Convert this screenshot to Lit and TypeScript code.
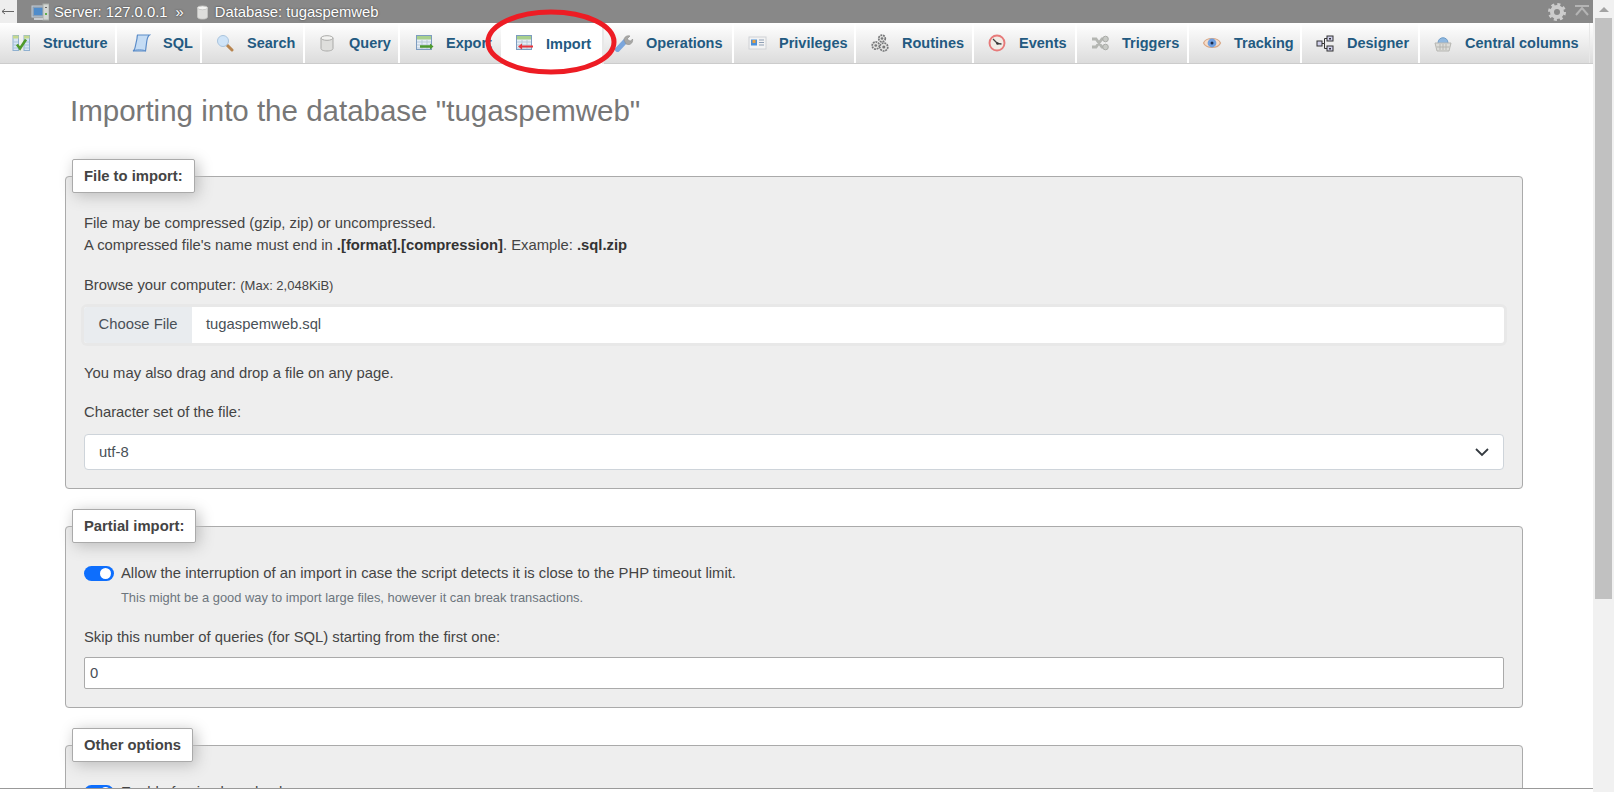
import { LitElement, html, css, svg } from "lit";
import { customElement } from "lit/decorators.js";

const tableLines = svg`
  <rect x="1.500" y="1.500" width="15" height="14" fill="#e6eef6" stroke="#7d9cc0"/>
  <rect x="2" y="2" width="14" height="3.500" fill="#a8d08d"/>
  <path d="M2 8h14M2 11h14M2 14h14M7 6v9M12 6v9" stroke="#b9c9da" fill="none"/>`;

const gear = (cx: number, cy: number, r: number) => svg`
  <circle cx=${cx} cy=${cy} r=${r} fill="#e4e4e2" stroke="#77787a" stroke-width="1.700" stroke-dasharray="1.900 .8"/>
  <circle cx=${cx} cy=${cy} r=${r * 0.38} fill="#77787a"/>`;

const icons: Record<string, unknown> = {
  server: svg`
    <rect x="1" y="3" width="13" height="11" fill="#8a9fb5" stroke="#c4ccd4"/>
    <rect x="3" y="5" width="9" height="7" fill="#4f8ccb"/>
    <rect x="12" y="1" width="6" height="16" fill="#d3d6d3" stroke="#a9aeaa"/>
    <rect x="14" y="4" width="2" height="1" fill="#666"/><rect x="14" y="10" width="2" height="2" fill="#5fae4a"/>
    <rect x="3" y="15" width="9" height="2" fill="#c9cdd1"/>`,
  db: svg`
    <path d="M3 4v11c0 1.500 2.500 2.500 6 2.500s6-1 6-2.500V4z" fill="#dededc" stroke="#c4c4c2"/>
    <ellipse cx="9" cy="4" rx="6" ry="2.300" fill="#f4f4f2" stroke="#c4c4c2"/>`,
  structure: svg`
    <rect x="1" y="1.500" width="5.500" height="15" fill="#d7e5f3" stroke="#8fb0d0"/>
    <rect x="12" y="1.500" width="5.500" height="15" fill="#d7e5f3" stroke="#8fb0d0"/>
    <rect x="1" y="1.500" width="5.500" height="3" fill="#c5d98f"/><rect x="12" y="1.500" width="5.500" height="3" fill="#c5d98f"/>
    <path d="M1 8h5M1 11h5M1 14h5M12 8h5M12 11h5M12 14h5" stroke="#a9c3dc"/>
    <path d="M5 10.500l3 4 6-9" fill="none" stroke="#4f9a2a" stroke-width="2.600"/>`,
  sql: svg`
    <path d="M5.500 1h12c-1.500 1-2.200 3-2.700 6L13.500 17H1c1.200-.5 1.900-2 2.200-4L5 4.500c.1-1.500.3-2.800.5-3.500z" fill="#c5dcf4" stroke="#5b8cc8" stroke-width="1.200"/>
    <path d="M1 17c1.500-1.500 11-1.500 12.500 0" fill="none" stroke="#5b8cc8"/>`,
  search: svg`
    <path d="M10.500 10.500l5.500 5.500" stroke="#b8854f" stroke-width="3" stroke-linecap="round"/>
    <circle cx="7" cy="7" r="5.500" fill="#cfe4f8" stroke="#a9c3dc"/>`,
  query: svg`
    <path d="M3 4v10.500c0 1.500 2.500 2.500 6 2.500s6-1 6-2.500V4z" fill="#dededc" stroke="#aaaaa8"/>
    <ellipse cx="9" cy="4" rx="6" ry="2.300" fill="#f3f3f1" stroke="#aaaaa8"/>`,
  export: svg`${tableLines}
    <path d="M5 12.500h10" stroke="#4e9a2e" stroke-width="2.500"/><path d="M15 9.500l3.500 3-3.500 3z" fill="#4e9a2e"/>`,
  import: svg`${tableLines}
    <path d="M5 12.500h13" stroke="#e8333b" stroke-width="2"/><path d="M7 9.500l-4 3 4 3z" fill="#e8333b"/>`,
  operations: svg`
    <path d="M2.500 15.500L10 7.500" stroke="#7ba6dc" stroke-width="5" stroke-linecap="round"/>
    <path d="M9 6c0-3 3-5 6-4l-2.500 2.500 1 2L16 7l1.500-2c.8 3-1.500 6-4.500 5.500L11 10z" fill="#a8a8a6" stroke="#8d8d8b" stroke-width=".6"/>`,
  privileges: svg`
    <rect x="1" y="3" width="17" height="12" fill="#f3f3f3" stroke="#cfd2d6"/>
    <rect x="3" y="5.500" width="6" height="6" fill="#4a8fd8"/><rect x="4.500" y="6" width="3" height="3" fill="#e8a040"/>
    <path d="M11 6h5M11 8.500h5M11 11h5" stroke="#8f9fb4"/>`,
  routines: svg`${gear(11, 4.500, 3.300)}${gear(4.800, 11.500, 3.600)}${gear(12.800, 13, 4)}`,
  events: svg`
    <circle cx="9" cy="9" r="7.500" fill="#f1ece6" stroke="#e77a7a" stroke-width="1.900"/>
    <path d="M9.500 9.500L5 5M9.500 9.500l4 .5" stroke="#444" stroke-width="1.300"/>
    <circle cx="9.500" cy="9.500" r="1.300" fill="#333"/>`,
  triggers: svg`
    <path d="M1 5h4l6 8h3M1 13h4l6-8h3" fill="none" stroke="#b4b6b2" stroke-width="2.800"/>
    <circle cx="14.500" cy="5" r="2.800" fill="#c8cac6" stroke="#a8aaa6"/>
    <circle cx="14.500" cy="13" r="2.800" fill="#c8cac6" stroke="#a8aaa6"/>`,
  tracking: svg`
    <path d="M.5 9C3 3 15 3 17.500 9 15 15 3 15 .5 9z" fill="#f6dcc8" stroke="#d8a888" stroke-width="1.200"/>
    <circle cx="9" cy="9" r="4.400" fill="#6f9fe0"/><circle cx="9" cy="9" r="1.500" fill="#1a2a4a"/>`,
  designer: svg`
    <rect x="1" y="7" width="5" height="5" fill="#d0d0ec" stroke="#333"/>
    <rect x="11" y="2" width="6" height="5" fill="#d0d0ec" stroke="#333"/>
    <rect x="11" y="12" width="6" height="5" fill="#d0d0ec" stroke="#333"/>
    <path d="M6 9.500h2.500V4.500H11M8.500 9.500v5H11" fill="none" stroke="#333"/>
    <rect x="13" y="4" width="2" height="1.500" fill="#333"/><rect x="13" y="14" width="2" height="1.500" fill="#333"/>`,
  central: svg`
    <path d="M4 9c0-7 10-7 10 0" fill="#8fb8e0" stroke="#6f9cc8"/>
    <path d="M1 9h16l-2 8H3z" fill="#dcdcd8" stroke="#b6b6b2"/>
    <path d="M6 10v6M9 10v6M12 10v6M2.500 13h13" stroke="#b6b6b2"/>`,
};

const tabs = [
  { id: "structure", label: "Structure", width: 117, pad: 12 },
  { id: "sql", label: "SQL", width: 85, pad: 15 },
  { id: "search", label: "Search", width: 103, pad: 14 },
  { id: "query", label: "Query", width: 95, pad: 13 },
  { id: "export", label: "Export", width: 103, pad: 15 },
  { id: "import", label: "Import", width: 101, pad: 12 },
  { id: "operations", label: "Operations", width: 130, pad: 11 },
  { id: "privileges", label: "Privileges", width: 122, pad: 14 },
  { id: "routines", label: "Routines", width: 118, pad: 15 },
  { id: "events", label: "Events", width: 103, pad: 14 },
  { id: "triggers", label: "Triggers", width: 112, pad: 14 },
  { id: "tracking", label: "Tracking", width: 113, pad: 14 },
  { id: "designer", label: "Designer", width: 118, pad: 14 },
  { id: "central", label: "Central columns", width: 170, pad: 14 },
];

@customElement("app-root")
export class AppRoot extends LitElement {
  static styles = css`
    :host {
      display: block;
      position: relative;
      width: 1614px;
      height: 792px;
      overflow: hidden;
      background: #fff;
      font-family: "Liberation Sans", Arial, sans-serif;
      font-size: 14.8px;
      color: #444;
    }
    .page { display: flex; height: 792px; }
    .left { width: 1593px; display: flex; flex-direction: column; }
    .topbar {
      height: 23px;
      background: #888;
      color: #fff;
      display: flex;
      align-items: center;
      font-size: 14.8px;
      text-shadow: 0 0 2px #333;
      flex: none;
    }
    .back {
      width: 17px;
      height: 23px;
      background: #eee;
      margin-right: 14px;
      display: flex;
      align-items: center;
    }
    .back svg { width: 17px; height: 23px; }
    .crumb-icon { width: 18px; height: 18px; flex: none; }
    .crumb-icon.db { width: 15px; }
    .crumb { margin-left: 5px; white-space: nowrap; }
    .sep { margin: 0 11px 0 8px; }
    .spacer { flex: 1; }
    .gear { width: 18px; height: 18px; margin-right: 8px; }
    .collapse { width: 16px; height: 16px; margin-right: 3px; }
    .tabs {
      height: 41px;
      flex: none;
      display: flex;
      background: linear-gradient(#fff, #dcdcdc);
      border-bottom: 1px solid #ccc;
      box-sizing: border-box;
    }
    .tab {
      box-sizing: border-box;
      display: flex;
      align-items: center;
      border-right: 2px solid #fff;
      font-size: 14.5px;
      font-weight: bold;
      color: #235a81;
      white-space: nowrap;
    }
    .tab.active { background: #fff; margin-bottom: -1px; border-right-color: #e8e8e8; }
    .tab.last { border-right: 1px solid #e8e8e8; }
    .tab svg { width: 19px; height: 19px; margin-right: 12px; flex: none; filter: blur(0.3px); }
    main {
      flex: 1;
      min-height: 0;
      overflow: hidden;
      padding: 27px 70px 0 65px;
    }
    h1 {
      margin: 0 0 28px 5px;
      font-size: 29.5px;
      line-height: 40px;
      font-weight: 400;
      color: #777;
    }
    fieldset {
      margin: 0 0 20px;
      padding: 19px 18px 18px;
      border: 1px solid #aaa;
      border-radius: 4px;
      background: #eee;
      min-width: 0;
    }
    legend {
      box-sizing: border-box;
      height: 34px;
      margin-left: -12px;
      padding: 0 11px;
      line-height: 32px;
      font-weight: bold;
      color: #444;
      background: #fff;
      border: 1px solid #aaa;
      border-radius: 2px;
      box-shadow: 3px 3px 15px #bbb;
    }
    p { margin: 0; line-height: 22px; }
    b { color: #333; }
    .small { font-size: 13px; }
    .mt-18 { margin-top: 18px; }
    .mt-17 { margin-top: 17px; }
    .mt-19 { margin-top: 19px; }
    .file {
      display: flex;
      height: 36px;
      margin-top: 10px;
      line-height: 34px;
      background: #fff;
      border-radius: 3px;
      box-shadow: 0 0 0 3px #e8e8e8;
    }
    .file-btn {
      width: 108px;
      text-align: center;
      background: #e9ecef;
      color: #495057;
      border-radius: 3px 0 0 3px;
    }
    .file-name { padding-left: 14px; color: #495057; }
    .select {
      box-sizing: border-box;
      height: 36px;
      margin-top: 11px;
      padding: 0 12px 0 14px;
      display: flex;
      align-items: center;
      justify-content: space-between;
      background: #fff;
      border: 1px solid #ced4da;
      border-radius: 4px;
      color: #495057;
    }
    .select svg { width: 16px; height: 16px; margin-right: 1px; }
    .check { display: flex; align-items: center; gap: 7px; }
    .switch {
      width: 30px;
      height: 15px;
      border-radius: 8px;
      background: #0d6efd;
      flex: none;
      display: flex;
      justify-content: flex-end;
      align-items: center;
      padding-right: 3px;
      box-sizing: border-box;
    }
    .switch i { width: 11px; height: 11px; border-radius: 50%; background: #fff; }
    .hint {
      margin: 5px 0 0 37px;
      font-size: 12.9px;
      line-height: 18px;
      color: #6c757d;
    }
    .number {
      box-sizing: border-box;
      height: 32px;
      margin-top: 9px;
      padding-left: 5px;
      line-height: 30px;
      background: #fff;
      border: 1px solid #aaa;
      border-radius: 2px;
      color: #495057;
    }
    .console {
      flex: none;
      height: 4px;
      background: #fff;
      border-top: 1px solid #999;
      box-sizing: border-box;
    }
    .scrollbar {
      width: 21px;
      background: #f1f1f1;
      box-sizing: border-box;
      padding: 0 2px;
      display: flex;
      flex-direction: column;
    }
    .arrow { height: 18px; display: flex; align-items: center; justify-content: center; }
    .arrow i {
      border-left: 5px solid transparent;
      border-right: 5px solid transparent;
      border-bottom: 5px solid #a3a3a3;
    }
    .thumb { height: 581px; background: #c1c1c1; }
    .ring { position: absolute; left: 485px; top: 8px; width: 133px; height: 68px; pointer-events: none; }
  `;

  render() {
    return html`
      <div class="page">
        <div class="left">
          <div class="topbar">
            <div class="back">
              <svg viewBox="0 0 17 23"><path d="M2 11.500h12M5 9l-3 2.500L5 14" fill="none" stroke="#666"/></svg>
            </div>
            <svg class="crumb-icon" viewBox="0 0 18 18">${icons.server}</svg>
            <span class="crumb">Server: 127.0.0.1</span>
            <span class="sep">»</span>
            <svg class="crumb-icon db" viewBox="0 0 18 18">${icons.db}</svg>
            <span class="crumb">Database: tugaspemweb</span>
            <span class="spacer"></span>
            <svg class="gear" viewBox="0 0 18 18">
              <circle cx="9" cy="9" r="5" fill="none" stroke="#ccc" stroke-width="4"/>
              <circle cx="9" cy="9" r="7.500" fill="none" stroke="#ccc" stroke-width="3" stroke-dasharray="3 2.900"/>
            </svg>
            <svg class="collapse" viewBox="0 0 16 16">
              <path d="M1 2h14M2 11l6-7 6 7" fill="none" stroke="#b4b4b4" stroke-width="2"/>
            </svg>
          </div>
          <nav class="tabs">
            ${tabs.map(
              (t, i) => html`
                <div
                  class="tab ${t.id === "import" ? "active" : ""} ${i === tabs.length - 1 ? "last" : ""}"
                  style="width:${t.width}px;padding-left:${t.pad}px"
                >
                  <svg viewBox="0 0 19 19">${icons[t.id]}</svg>
                  <span>${t.label}</span>
                </div>
              `
            )}
          </nav>
          <main>
            <h1>Importing into the database "tugaspemweb"</h1>
            <fieldset>
              <legend>File to import:</legend>
              <p>File may be compressed (gzip, zip) or uncompressed.</p>
              <p>A compressed file's name must end in <b>.[format].[compression]</b>. Example: <b>.sql.zip</b></p>
              <p class="mt-18">Browse your computer: <span class="small">(Max: 2,048KiB)</span></p>
              <div class="file">
                <div class="file-btn">Choose File</div>
                <div class="file-name">tugaspemweb.sql</div>
              </div>
              <p class="mt-19">You may also drag and drop a file on any page.</p>
              <p class="mt-17">Character set of the file:</p>
              <div class="select">
                <span>utf-8</span>
                <svg viewBox="0 0 16 16"><path d="M2 5l6 6 6-6" fill="none" stroke="#343a40" stroke-width="1.800"/></svg>
              </div>
            </fieldset>
            <fieldset>
              <legend>Partial import:</legend>
              <div class="check">
                <div class="switch"><i></i></div>
                <p>Allow the interruption of an import in case the script detects it is close to the PHP timeout limit.</p>
              </div>
              <p class="hint">This might be a good way to import large files, however it can break transactions.</p>
              <p class="mt-19">Skip this number of queries (for SQL) starting from the first one:</p>
              <div class="number">0</div>
            </fieldset>
            <fieldset>
              <legend>Other options</legend>
              <div class="check">
                <div class="switch"><i></i></div>
                <p>Enable foreign key checks</p>
              </div>
            </fieldset>
          </main>
          <div class="console"></div>
        </div>
        <div class="scrollbar">
          <div class="arrow"><i></i></div>
          <div class="thumb"></div>
        </div>
      </div>
      <svg class="ring" viewBox="0 0 133 68">
        <ellipse cx="66" cy="34" rx="63" ry="30" fill="none" stroke="#ed1c24" stroke-width="5"/>
      </svg>
    `;
  }
}
